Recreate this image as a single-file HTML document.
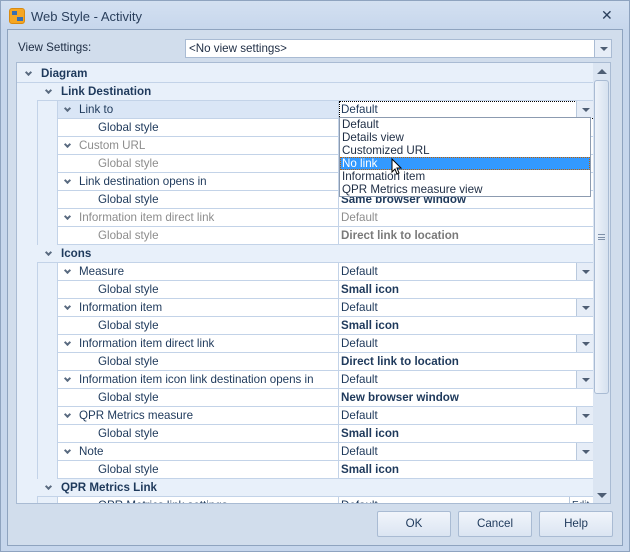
<!DOCTYPE html><html><head><meta charset="utf-8"><style>
*{margin:0;padding:0;box-sizing:border-box}
body{width:630px;height:552px;overflow:hidden;background:#c6d6ec;font-family:"Liberation Sans",sans-serif;font-size:11.6px;color:#1e395b;position:relative}
.a{position:absolute}
.r{position:absolute;height:18px;line-height:17px;white-space:nowrap}
.g{color:#8d8d8d}
.b{font-weight:bold}
.chev{position:absolute;width:5px;height:5px;border-right:2px solid #5a6b80;border-bottom:2px solid #5a6b80;transform:rotate(45deg)}
.btn{position:absolute;top:0;right:0;width:17px;height:17px;border-left:1px solid #b9c9dd;background:#e6edf7}
.btn:after{content:"";position:absolute;left:5px;top:7px;border-left:4px solid transparent;border-right:4px solid transparent;border-top:4px solid #4e5e74}
.pb{position:absolute;top:511px;height:26px;width:74px;border:1px solid #a9bbd3;border-radius:2px;background:linear-gradient(#f1f5fb,#dbe5f2);text-align:center;line-height:24px;color:#1e395b}
</style></head><body>
<div class="a" style="left:0;top:0;width:630px;height:552px;border:1px solid #8ea3bf;background:linear-gradient(#d3e0f1,#c6d6ec 30px)"></div>
<div class="a" style="left:9px;top:8px;width:16px;height:16px;border-radius:3px;background:#f5a623;border:1px solid #d98a10"></div>
<div class="a" style="left:12px;top:11px;width:5px;height:4px;background:#3a6fb0"></div>
<div class="a" style="left:17px;top:17px;width:6px;height:4px;background:#3a6fb0"></div>
<div class="a" style="left:31px;top:9px;font-size:13px;color:#2a3f5c">Web Style - Activity</div>
<div class="a" style="left:601px;top:7px;font-size:14px;color:#2a3f5c">✕</div>
<div class="a" style="left:7px;top:29px;width:616px;height:517px;border:1px solid #8ea3bf;background:#d1ddec"></div>
<div class="a" style="left:18px;top:41px;color:#1e2d44">View Settings:</div>
<div class="a" style="left:185px;top:39px;width:427px;height:19px;border:1px solid #a9bbd3;background:#fff;padding-left:3px;line-height:17px;color:#1e2d44">&lt;No view settings&gt;<div class="btn" style="border-left-color:#a9bbd3"></div></div>
<div class="a" style="left:16px;top:62px;width:595px;height:442px;border:1px solid #a9bbd3;background:#e8f0fa;overflow:hidden">
<div class="a" style="left:20px;top:20px;width:556px;height:430px;border-left:1px solid #c3d3e8"></div>
<div id="rows"></div>
</div>
<div class="a" style="left:593px;top:63px;width:17px;height:440px;background:#dbe5f2"></div>
<div class="a" style="left:597px;top:69px;border-left:5px solid transparent;border-right:5px solid transparent;border-bottom:5px solid #4e5e74"></div>
<div class="a" style="left:594px;top:80px;width:15px;height:314px;border:1px solid #a9bbd3;border-radius:3px;background:linear-gradient(90deg,#eef3fa,#d6e1ef)"></div>
<div class="a" style="left:598px;top:234px;width:7px;height:6px;border-top:1px solid #7d8fa8;border-bottom:1px solid #7d8fa8"></div>
<div class="a" style="left:598px;top:237px;width:7px;height:1px;background:#7d8fa8"></div>
<div class="a" style="left:597px;top:493px;border-left:5px solid transparent;border-right:5px solid transparent;border-top:5px solid #4e5e74"></div>
<div class="pb" style="left:377px">OK</div>
<div class="pb" style="left:458px">Cancel</div>
<div class="pb" style="left:539px">Help</div>
<script>
const R=[
[0,'Diagram','b',null],
[1,'Link Destination','b',null],
[2,'Link to','','Default','sel'],
[3,'Global style','',''],
[2,'Custom URL','g',''],
[3,'Global style','g',''],
[2,'Link destination opens in','',''],
[3,'Global style','','Same browser window','vb'],
[2,'Information item direct link','g','Default','vg'],
[3,'Global style','g','Direct link to location','vbg'],
[1,'Icons','b',null],
[2,'Measure','','Default','btn'],
[3,'Global style','','Small icon','vb'],
[2,'Information item','','Default','btn'],
[3,'Global style','','Small icon','vb'],
[2,'Information item direct link','','Default','btn'],
[3,'Global style','','Direct link to location','vb'],
[2,'Information item icon link destination opens in','','Default','btn'],
[3,'Global style','','New browser window','vb'],
[2,'QPR Metrics measure','','Default','btn'],
[3,'Global style','','Small icon','vb'],
[2,'Note','','Default','btn'],
[3,'Global style','','Small icon','vb'],
[1,'QPR Metrics Link','b',null],
[3,'QPR Metrics link settings','','Default','edit']];
let h='';
R.forEach((r,i)=>{
 const t=2+i*18, lv=r[0];
 const x0=lv==0?0:lv==1?20:40;
 const bg=r[4]=='sel'?'#dae6f6':(lv<2?'#e8f0fa':'#fff');
 h+=`<div class="r" style="left:${x0}px;top:${t}px;width:${576-x0}px;background:${bg};border-bottom:1px solid #c3d3e8;${lv>=2?'border-left:1px solid #c3d3e8;':''}"></div>`;
 const tx=lv==0?24:lv==1?44:lv==2?62:81;
 if(lv<3){const cx=lv==0?9:lv==1?29:48;h+=`<div class="chev" style="left:${cx}px;top:${t+5}px"></div>`}
 h+=`<div class="r ${r[2]}" style="left:${tx}px;top:${t}px;">${r[1]}</div>`;
 if(r[3]!==null){
  h+=`<div class="a" style="left:321px;top:${t}px;width:1px;height:18px;background:#c3d3e8"></div>`;
  let cls='',st='';
  if(r[4]=='vb')cls='b';if(r[4]=='vg')cls='g';if(r[4]=='vbg'){cls='b';st='color:#7a7a7a;'}
  let extra='';
  if(r[4]=='btn'||r[4]=='sel')extra='<div class="btn"></div>';
  if(r[4]=='edit')extra='<div class="a" style="right:0;top:0;width:24px;height:17px;border-left:1px solid #b9c9dd;font-size:10px;padding-left:2px">Edit</div>';
  const bd=r[4]=='sel'?'outline:1px dotted #000;outline-offset:-1px;background:#fff;':'';
  h+=`<div class="r ${cls}" style="left:322px;top:${t}px;width:254px;padding-left:2px;${st}${bd}">${r[3]}${extra}</div>`;
 }
});
document.getElementById('rows').innerHTML=h;
</script>
<div class="a" style="left:339px;top:117px;width:252px;height:80px;background:#fff;border:1px solid #8c9bb0;line-height:13px;color:#1e2d44">
<div style="padding-left:2px">Default</div>
<div style="padding-left:2px">Details view</div>
<div style="padding-left:2px">Customized URL</div>
<div style="padding-left:2px;background:#3399ff;color:#fff;outline:1px dotted #c06000;outline-offset:-1px">No link</div>
<div style="padding-left:2px">Information item</div>
<div style="padding-left:2px">QPR Metrics measure view</div>
</div>
<svg class="a" style="left:391px;top:158px" width="12" height="18"><path d="M1 1 L1 14 L4 11 L6 16 L8 15 L6 10 L10 10 Z" fill="#fff" stroke="#000" stroke-width="1"/></svg>
</body></html>
